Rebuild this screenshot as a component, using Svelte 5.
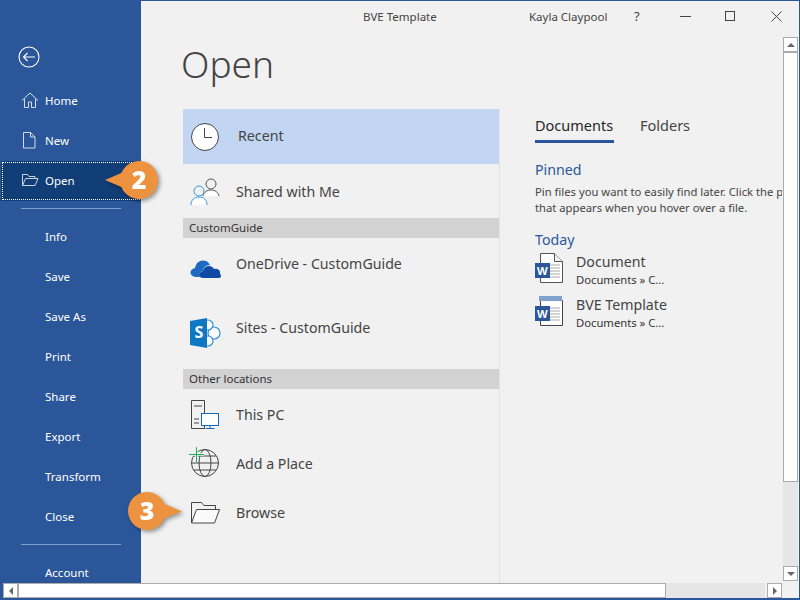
<script>
  const navTop = [
    { label: 'Home', icon: 'home' },
    { label: 'New', icon: 'new' },
    { label: 'Open', icon: 'open', active: true }
  ];
  const navMid = ['Info', 'Save', 'Save As', 'Print', 'Share', 'Export', 'Transform', 'Close'];
</script>

<div class="window">
  <aside class="sidebar">
    <div class="back">
      <svg width="24" height="24" viewBox="0 0 24 24" fill="none" stroke="#fff" stroke-width="1.1">
        <circle cx="12" cy="12" r="10" />
        <path d="M6.5 12H18M10.5 8 6.5 12l4 4" />
      </svg>
    </div>
    {#each navTop as item}
      <div class="nav" class:active={item.active}>
        <span class="nav-icon">
          {#if item.icon === 'home'}
            <svg width="18" height="18" viewBox="0 0 18 18" fill="none" stroke="#d5dded" stroke-width="1">
              <path d="M1 9.500 9 2l8 7.500M3.500 8v8.500H7.500V11h3v5.500h4V8" />
            </svg>
          {:else if item.icon === 'new'}
            <svg width="18" height="18" viewBox="0 0 18 18" fill="none" stroke="#d5dded" stroke-width="1">
              <path d="M2.500 1.500h7l4.500 4.500v11h-11.500zM9.500 1.500V6h4.500" />
            </svg>
          {:else}
            <svg width="18" height="18" viewBox="0 0 18 18" fill="none" stroke="#c9d3e6" stroke-width="1">
              <path d="M1.500 14.500V3.500h5l1.500 2h6v2M1.500 14.500 4.500 7.500h12.500l-3 7z" />
            </svg>
          {/if}
        </span>
        <span>{item.label}</span>
      </div>
    {/each}
    <div class="sep"></div>
    {#each navMid as label}
      <div class="nav"><span class="nav-icon"></span><span>{label}</span></div>
    {/each}
    <div class="sep"></div>
    <div class="nav"><span class="nav-icon"></span><span>Account</span></div>
  </aside>

  <main class="main">
    <header class="titlebar">
      <span class="doc-title">BVE Template</span>
      <span class="user">Kayla Claypool</span>
      <span class="help">?</span>
      <svg class="min" width="11" height="1" viewBox="0 0 11 1"><path d="M0 .5h11" stroke="#444" /></svg>
      <svg class="max" width="10" height="10" viewBox="0 0 10 10" fill="none"><rect x=".5" y=".5" width="9" height="9" stroke="#444" /></svg>
      <svg class="close" width="11" height="11" viewBox="0 0 11 11" fill="none"><path d="M.5.5l10 10M10.500.5l-10 10" stroke="#444" /></svg>
    </header>

    <h1>Open</h1>

    <div class="columns">
      <section class="places">
        <div class="place recent">
          <svg width="30" height="30" viewBox="0 0 30 30" fill="#fff" stroke="#444" stroke-width="1">
            <circle cx="15" cy="15" r="13.500" />
            <path d="M14.500 6v9.500H22" fill="none" />
          </svg>
          <span>Recent</span>
        </div>
        <div class="place shared">
          <svg width="32" height="30" viewBox="0 0 32 30" fill="none">
            <circle cx="21" cy="8" r="5" stroke="#555" />
            <path d="M13 20c1-4 4-6 8-6s7 2 8 6" stroke="#555" fill="#fff" />
            <circle cx="9" cy="15" r="5" stroke="#3a96dd" fill="#f1f1f1" />
            <path d="M1 29c0-5 3-8 8-8s8 3 8 8" stroke="#3a96dd" fill="#fff" />
          </svg>
          <span>Shared with Me</span>
        </div>
        <div class="group">CustomGuide</div>
        <div class="place cloud onedrive">
          <svg width="32" height="22" viewBox="0 0 32 22">
            <path d="M5 20c-6-1-6-8 0-9 1-6 6-9 11-7 2 1 3 2 4 4-4 0-7 3-7 6-3 0-4 3-3 6z" fill="#1f6ac0" />
            <path d="M13 21c-5 0-5-6 0-7 1-5 8-7 11-2 4-1 7 2 6 5 2 2 1 4-2 4z" fill="#0f4ba6" />
          </svg>
          <span>OneDrive - CustomGuide</span>
        </div>
        <div class="place cloud sites">
          <svg width="32" height="30" viewBox="0 0 32 30">
            <g fill="#fff" stroke="#2f8fd4" stroke-width="1.200">
              <circle cx="24" cy="15" r="6" />
              <circle cx="18" cy="7" r="5" />
              <circle cx="18" cy="23" r="5" />
            </g>
            <path d="M0 3 17 0v30L0 27z" fill="#0f78c4" />
            <text x="4.500" y="20" class="s-mark">S</text>
          </svg>
          <span>Sites - CustomGuide</span>
        </div>
        <div class="group other">Other locations</div>
        <div class="place loc">
          <svg width="30" height="31" viewBox="0 -1 30 31" fill="none">
            <path d="M1.500.5h13v28h-13zM4 6h8M4 19h5M4 23h5" stroke="#444" />
            <rect x="11.500" y="13.500" width="17" height="12" fill="#fff" stroke="#0f6cbd" stroke-width="1" />
            <path d="M20 25.500v3M15.500 28.500h9" stroke="#0f6cbd" />
          </svg>
          <span>This PC</span>
        </div>
        <div class="place loc">
          <svg class="globe" width="30" height="31" viewBox="0 0 30 31" fill="none">
            <circle cx="15" cy="15" r="13.500" stroke="#444" />
            <ellipse cx="15" cy="15" rx="6" ry="13.500" stroke="#444" />
            <path d="M1.500 15h27M4 8h22M4 22h22" stroke="#444" />
            <path d="M-1 6.500h15M6.500-1v15" stroke="#f1f1f1" stroke-width="2.500" />
            <path d="M-1 6.500h15M6.500-1v15" stroke="#19b35c" stroke-width="1" />
          </svg>
          <span>Add a Place</span>
        </div>
        <div class="place loc">
          <svg width="30" height="23" viewBox="0 0 30 23" fill="none" stroke="#444">
            <path d="M1.500 22V1.500h10l2.500 3h11.500V8" fill="#f1f1f1" />
            <path d="M1.500 22 6.500 8.500h23L24.500 22z" fill="#fafafa" />
          </svg>
          <span>Browse</span>
        </div>
      </section>

      <section class="recent-files">
        <div class="tabs">
          <span class="tab on">Documents</span>
          <span class="tab">Folders</span>
        </div>
        <div class="heading pinned">Pinned</div>
        <p class="hint">Pin files you want to easily find later. Click the pin icon<br />that appears when you hover over a file.</p>
        <div class="heading today">Today</div>
        <div class="file">
          <svg width="28" height="30" viewBox="0 0 28 30">
            <path d="M5.500.5h14l8 8v21h-22z" fill="#fff" stroke="#555" />
            <path d="M19.500.5v8h8" fill="#eee" stroke="#555" />
            <path d="M14 12h11M14 15h11M14 18h11M14 21h11M14 24h11" stroke="#aaa" />
            <rect x="0" y="10" width="15" height="15" fill="#2b579a" />
            <text x="2" y="22" class="w-mark">W</text>
          </svg>
          <div class="file-text"><div class="file-name">Document</div><div class="file-path">Documents » C...</div></div>
        </div>
        <div class="file">
          <svg width="28" height="30" viewBox="0 0 28 30">
            <path d="M5.500 4.500h22v25h-22z" fill="#fff" stroke="#444" />
            <rect x="4" y="0" width="23" height="5" fill="#7fa3cc" />
            <path d="M14 12h11M14 15h11M14 18h11M14 21h11M14 24h11" stroke="#aaa" />
            <rect x="0" y="10" width="15" height="15" fill="#2b579a" />
            <text x="2" y="22" class="w-mark">W</text>
          </svg>
          <div class="file-text"><div class="file-name">BVE Template</div><div class="file-path">Documents » C...</div></div>
        </div>
      </section>
    </div>
  </main>

  <div class="vscroll">
    <div class="sb-btn"><i class="tri up"></i></div>
    <div class="v-thumb"></div>
    <div class="v-gap"></div>
    <div class="sb-btn"><i class="tri down"></i></div>
  </div>
  <div class="hscroll">
    <div class="sb-btn"><i class="tri left"></i></div>
    <div class="h-thumb"></div>
    <div class="h-gap"></div>
    <div class="sb-btn"><i class="tri right"></i></div>
  </div>

  <div class="callout two">
    <svg width="60" height="44" viewBox="0 0 60 44">
      <path d="M1 22 17.300 15A19 19 0 1 1 17.300 29z" fill="#ed933f" />
    </svg>
    <b>2</b>
  </div>
  <div class="callout three">
    <svg width="60" height="44" viewBox="0 0 60 44">
      <path d="M59 22.500 41.700 15A19 19 0 1 0 41.700 29z" fill="#ed933f" />
    </svg>
    <b>3</b>
  </div>
</div>

<style>
  :global(body) { margin: 0; }
  .window {
    position: relative;
    display: flex;
    width: 800px;
    height: 600px;
    overflow: hidden;
    box-sizing: border-box;
    background: #f1f1f1;
    border: solid #2b579a;
    border-width: 1px 1px 2px 0;
    font-family: "Noto Sans", "Open Sans", sans-serif;
    color: #444;
  }
  .sidebar {
    flex: none;
    width: 141px;
    margin-top: -1px;
    background: #2b579a;
    color: #fff;
    font-size: 11.500px;
  }
  .back { height: 45px; padding: 45px 0 0 17px; margin-bottom: -9px; }
  .back svg { display: block; }
  .nav { display: flex; align-items: center; height: 40px; box-sizing: border-box; padding-bottom: 2px; }
  .nav-icon { flex: none; width: 45px; display: flex; justify-content: flex-end; }
  .nav-icon svg { margin-right: 6px; }
  .nav.active { background: #123e78; outline: 1px dotted #fff; outline-offset: -2px; margin-left: 1px; }
  .nav.active .nav-icon { width: 44px; }
  .sep { height: 16px; display: flex; align-items: center; padding: 0 20px 0 21px; }
  .sep::before { content: ""; flex: 1; height: 1px; margin-top: -1px; background: #7f9fcb; }

  .main { flex: 1; min-width: 0; display: flex; flex-direction: column; }
  .titlebar { position: relative; height: 36px; flex: none; font-size: 11.500px; color: #444; }
  .doc-title { position: absolute; left: 222px; top: 8px; }
  .user { position: absolute; left: 388px; top: 8px; }
  .help { position: absolute; left: 493px; top: 6px; font-size: 13px; }
  .min { position: absolute; left: 539px; top: 15px; }
  .max { position: absolute; left: 584px; top: 10px; }
  .close { position: absolute; left: 630px; top: 10px; }
  h1 {
    margin: 0 0 0 40px;
    height: 72px;
    font-family: "Noto Sans", sans-serif;
    font-weight: 300;
    font-size: 37px;
    line-height: 54px;
    color: #444;
  }
  .columns { display: flex; flex: 1; min-height: 0; margin-left: 42px; }
  .places {
    flex: none;
    width: 317px;
    height: 474px;
    box-sizing: border-box;
    border-right: 1px solid #e3e3e3;
    font-size: 14.200px;
    color: #444;
  }
  .place { display: flex; align-items: center; padding-left: 7px; }
  .place > span { margin-left: 15px; }
  .recent { height: 55px; box-sizing: border-box; background: #c2d5f2; padding-left: 7px; }
  .recent > span { margin-left: 18px; margin-bottom: 2px; }
  .shared { height: 54px; }
  .shared > span { margin-left: 14px; }
  .cloud { height: 64px; align-items: flex-start; }
  .cloud > span { margin-top: 16px; margin-left: 14px; }
  .onedrive svg { margin-top: 19px; }
  .sites svg { margin-top: 16px; }
  .group {
    height: 20px;
    line-height: 20px;
    padding-left: 6px;
    background: #d2d2d2;
    font-size: 11.500px;
    color: #333;
  }
  .other { margin-top: 3px; }
  .loc { height: 49px; box-sizing: border-box; padding-top: 2px; }
  .loc svg { flex: none; }
  .globe { overflow: visible; }
  .loc > span { margin-left: 16px; width: 200px; }

  .recent-files { flex: 1; min-width: 0; padding-left: 35px; overflow: hidden; margin-right: 17px; }
  .tabs { display: flex; gap: 26px; font-size: 14.500px; height: 34px; }
  .tab { height: 34px; line-height: 32px; box-sizing: border-box; color: #444; }
  .tab.on { color: #262626; border-bottom: 3px solid #2b579a; width: 79px; white-space: nowrap; }
  .heading { color: #2b579a; font-size: 14.200px; line-height: 20px; }
  .pinned { margin-top: 17px; }
  .hint { margin: 4px 0 0; font-size: 11.250px; line-height: 16px; white-space: nowrap; color: #444; }
  .today { margin-top: 14px; }
  .file { display: flex; height: 43px; align-items: flex-start; }
  .file svg { flex: none; margin-top: 3px; }
  .file-text { margin-left: 13px; padding-top: 2px; }
  .file-name { font-size: 14.200px; line-height: 20px; }
  .file-path { font-size: 11.250px; line-height: 16px; color: #333; }
  .s-mark { font: bold 16px "Noto Sans", sans-serif; fill: #fff; }
  .w-mark { font: bold 11px "Noto Sans", sans-serif; fill: #fff; }

  .vscroll {
    position: absolute;
    left: 783px;
    top: 36px;
    width: 15px;
    height: 544px;
    display: flex;
    flex-direction: column;
  }
  .hscroll {
    position: absolute;
    left: 3px;
    top: 582px;
    width: 779px;
    height: 15px;
    display: flex;
  }
  .sb-btn, .v-thumb, .h-thumb {
    box-sizing: border-box;
    background: #fff;
    border: 1px solid #ababab;
    flex: none;
  }
  .sb-btn { width: 15px; height: 15px; display: flex; align-items: center; justify-content: center; }
  .v-thumb { height: 430px; width: 15px; }
  .h-thumb { width: 648px; height: 15px; }
  .v-gap { flex: 1; background: #e6e6e6; }
  .h-gap { flex: 1; background: #e6e6e6; margin-right: 2px; }
  .tri { display: block; width: 0; height: 0; border: 4px solid transparent; }
  .tri.up { border-bottom-color: #666; border-top-width: 0; }
  .tri.down { border-top-color: #666; border-bottom-width: 0; }
  .tri.left { border-right-color: #666; border-left-width: 0; }
  .tri.right { border-left-color: #666; border-right-width: 0; }

  .callout { position: absolute; width: 60px; height: 44px; filter: drop-shadow(2px 2px 2px rgba(0, 0, 0, .4)); }
  .callout svg { display: block; }
  .callout b { position: absolute; top: 0; height: 44px; width: 39px; text-align: center; color: #fff; font: 800 25px/43px "Open Sans", sans-serif; }
  .two { left: 104px; top: 157px; }
  .two b { left: 15.500px; }
  .three { left: 123px; top: 488px; }
  .three b { left: 4.500px; }
</style>
